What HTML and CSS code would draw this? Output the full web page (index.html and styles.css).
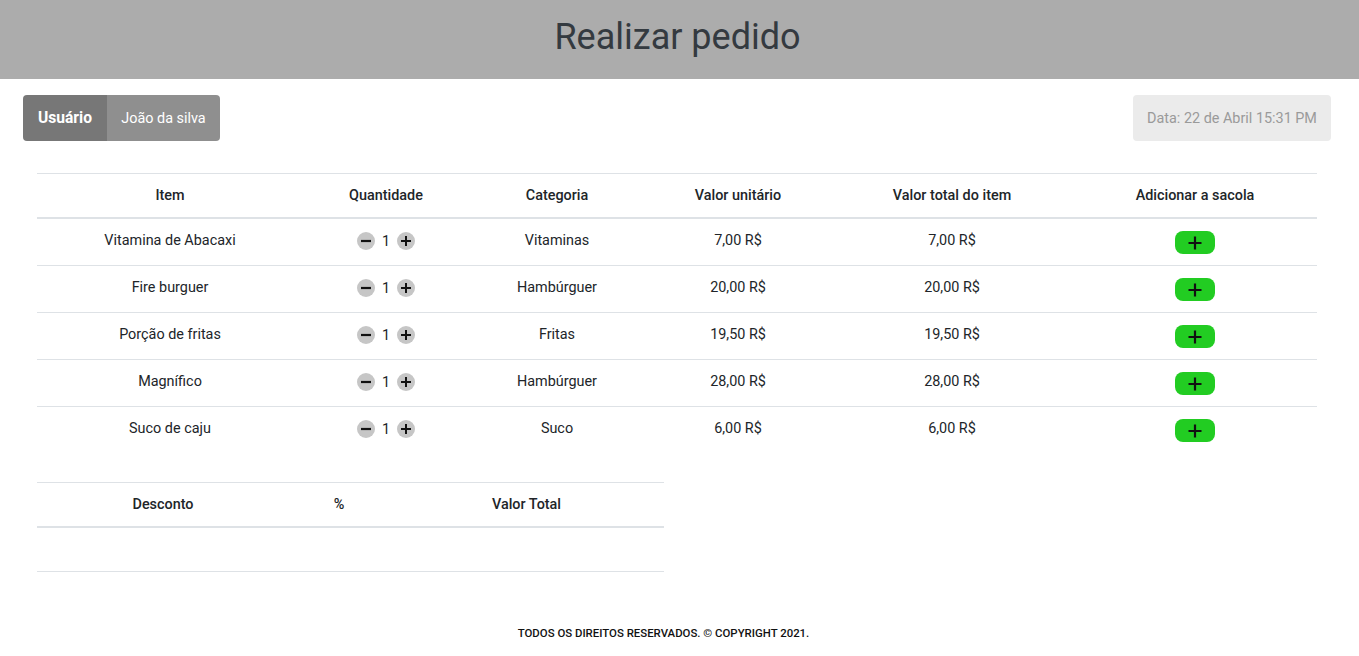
FILE: index.html
```html
<!DOCTYPE html>
<html lang="pt">
<head>
<meta charset="utf-8">
<title>Realizar pedido</title>
<link rel="stylesheet" href="styles.css">
</head>
<body>
<header class="topbar"><h1 class="title">Realizar pedido</h1></header>
<section class="infobar">
  <div class="user"><span class="user-label">Usuário</span><span class="user-name">João da silva</span></div>
  <div class="date">Data: 22 de Abril 15:31 PM</div>
</section>
<main class="content">
  <table class="tbl items">
    <colgroup><col style="width:266px"><col style="width:166px"><col style="width:176px"><col style="width:186px"><col style="width:242px"><col style="width:244px"></colgroup>
    <thead><tr><th>Item</th><th>Quantidade</th><th>Categoria</th><th>Valor unitário</th><th>Valor total do item</th><th>Adicionar a sacola</th></tr></thead>
    <tbody id="rows"></tbody>
  </table>
  <table class="tbl totals">
    <colgroup><col style="width:252px"><col style="width:100px"><col style="width:275px"></colgroup>
    <thead><tr><th>Desconto</th><th>%</th><th>Valor Total</th></tr></thead>
    <tbody><tr class="empty"><td></td><td></td><td></td></tr></tbody>
  </table>
</main>
<footer class="footer">TODOS OS DIREITOS RESERVADOS. © COPYRIGHT 2021.</footer>
<script>
var data=[["Vitamina de Abacaxi","Vitaminas","7,00 R$"],["Fire burguer","Hambúrguer","20,00 R$"],["Porção de fritas","Fritas","19,50 R$"],["Magnífico","Hambúrguer","28,00 R$"],["Suco de caju","Suco","6,00 R$"]];
var minus='<svg width="18" height="18" viewBox="0 0 18 18"><path d="M4 9h10" stroke="#111" stroke-width="2.2"/></svg>';
var plus='<svg width="18" height="18" viewBox="0 0 18 18"><path d="M4 9h10M9 4v10" stroke="#111" stroke-width="2"/></svg>';
var bigplus='<svg width="16" height="16" viewBox="0 0 16 16"><path d="M1.5 8h13M8 1.5v13" stroke="#111" stroke-width="2.2"/></svg>';
var h='';
data.forEach(function(r){
h+='<tr><td>'+r[0]+'</td><td><span class="qty"><span class="circ">'+minus+'</span><span class="num">1</span><span class="circ">'+plus+'</span></span></td><td>'+r[1]+'</td><td>'+r[2]+'</td><td>'+r[2]+'</td><td><span class="add">'+bigplus+'</span></td></tr>';
});
document.getElementById('rows').innerHTML=h;
</script>
</body>
</html>
```
FILE: styles.css
```css
* { box-sizing: border-box; }
body {
  margin: 0;
  font-family: Roboto, "Liberation Sans", Arial, sans-serif;
  font-size: 14.4px;
  color: #212529;
  background: #fff;
}
.topbar {
  height: 79px;
  background: #acacac;
  display: flex;
  align-items: center;
  justify-content: center;
}
.title {
  margin: 0 4px 0 0;
  font-size: 36px;
  font-weight: 400;
  color: #343a40;
  line-height: 1;
  padding-bottom: 6px;
}
.infobar {
  display: flex;
  justify-content: space-between;
  padding: 16px 28px 0 23px;
}
.user {
  display: flex;
  height: 46px;
  border-radius: 4px;
  overflow: hidden;
  color: #fff;
}
.user-label {
  background: #777;
  font-weight: 700;
  font-size: 15.6px;
  width: 84px;
  justify-content: center;
  display: flex;
  align-items: center;
}
.user-name {
  background: #8f8f8f;
  width: 113px;
  justify-content: center;
  display: flex;
  align-items: center;
}
.date {
  height: 46px;
  width: 198px;
  background: #ebebeb;
  color: #9a9a9a;
  border-radius: 4px;
  display: flex;
  align-items: center;
  justify-content: center;
}
.content {
  padding: 32px 42px 0 37px;
}
.tbl {
  border-collapse: collapse;
  table-layout: fixed;
  text-align: center;
}
.items { width: 1280px; }
.totals { width: 627px; margin-top: 29px; }
.tbl th {
  font-weight: 500;
  line-height: 21px;
  padding: 11px 6px;
  border-top: 1px solid #dee2e6;
  border-bottom: 2px solid #dee2e6;
}
.tbl td {
  line-height: 21px;
  height: 46px;
  padding: 11px 6px 14px;
  border-top: 1px solid #dee2e6;
  vertical-align: top;
}
.tbl tbody tr:first-child td { border-top: none; }
.totals .empty td {
  height: 44px;
  padding: 0;
  border-bottom: 1px solid #dee2e6;
}
.qty {
  display: inline-flex;
  align-items: center;
  gap: 4px;
  vertical-align: top;
  margin-top: 1px;
  height: 20px;
}
.circ {
  width: 18px;
  height: 18px;
  border-radius: 50%;
  background: #c6c6c6;
  display: inline-flex;
}
.num { width: 14px; text-align: center; }
.add {
  display: inline-flex;
  align-items: center;
  justify-content: center;
  width: 40px;
  height: 23px;
  border-radius: 8px;
  background: #22cc22;
  vertical-align: top;
  margin: 1px 0 -3px;
}
.footer {
  text-align: center;
  font-size: 11.4px;
  font-weight: 500;
  color: #111;
  margin-top: 54px;
  padding-right: 32px;
}
```
